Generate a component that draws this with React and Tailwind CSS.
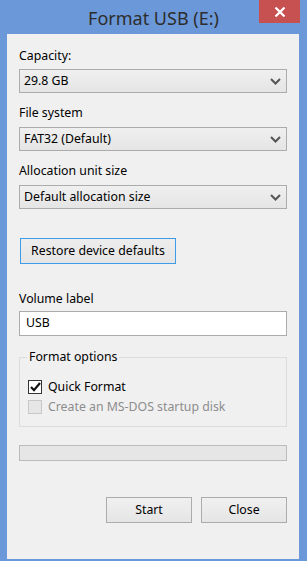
import React from "react";

const font = { fontFamily: '"Segoe UI", "Noto Sans", "Open Sans", sans-serif' };

function Chevron() {
  return (
    <svg width="11" height="7" viewBox="0 0 11 7" className="block">
      <path d="M1 1 L5.5 5.5 L10 1" fill="none" stroke="#555" strokeWidth="2" />
    </svg>
  );
}

function Combo({ value }) {
  return (
    <div className="mx-3 flex h-[24px] items-center justify-between border border-[#acacac] bg-gradient-to-b from-[#f0f0f0] to-[#e5e5e5] pl-[4px] pr-[5px]">
      <span className="text-[12.3px] text-black">{value}</span>
      <Chevron />
    </div>
  );
}

function Label({ children, className = "" }) {
  return <div className={"mx-3 text-[12.3px] leading-[16px] text-black " + className}>{children}</div>;
}

export default function App() {
  return (
    <div className="flex h-[561px] w-[307px] flex-col bg-[#6b98d8]" style={font}>
      <div className="relative flex h-[34px] shrink-0 items-start justify-center">
        <span className="mt-[6px] text-[18px] leading-[24px] text-[#2d2d2d]">Format USB (E:)</span>
        <div className="absolute right-[7px] top-0 flex h-[23px] w-[41px] items-center justify-center bg-[#c75050]">
          <svg width="12" height="10" viewBox="0 0 12 10">
            <path d="M1.5 0.5 L10.5 9.5 M10.5 0.5 L1.5 9.5" stroke="white" strokeWidth="2.2" />
          </svg>
        </div>
      </div>
      <div className="ml-[7px] mr-[8px] flex h-[525px] flex-col bg-[#f0f0f0]">
        <Label className="mt-[14px]">Capacity:</Label>
        <div className="mt-[5px]"><Combo value="29.8 GB" /></div>
        <Label className="mt-[12px]">File system</Label>
        <div className="mt-[6px]"><Combo value="FAT32 (Default)" /></div>
        <Label className="mt-[12px]">Allocation unit size</Label>
        <div className="mt-[6px]"><Combo value="Default allocation size" /></div>
        <div className="mx-[13px] mt-[29px] flex">
          <div className="flex h-[26px] w-[156px] items-center justify-center border border-[#3c9ce8] bg-gradient-to-b from-[#ededed] to-[#e5e5e5] text-[12.3px] text-black">
            Restore device defaults
          </div>
        </div>
        <Label className="mt-[27px]">Volume label</Label>
        <div className="mx-3 mt-[4px] flex h-[25px] items-center border border-[#acacac] bg-white pl-[6px] text-[12.3px] text-black">USB</div>
        <div className="relative mx-3 mt-[21px] h-[70px] border border-[#dcdcdc]">
          <div className="absolute left-[7px] top-[-9px] bg-[#f0f0f0] px-[2px] text-[12.3px] leading-[16px] text-black">Format options</div>
          <div className="ml-[8px] mt-[21px] flex items-center gap-[6px]">
            <div className="flex h-[14px] w-[14px] items-center justify-center border border-[#333] bg-white">
              <svg width="11" height="10" viewBox="0 0 11 10">
                <path d="M1 5 L4 8.2 L10 1" fill="none" stroke="#111" strokeWidth="2.2" />
              </svg>
            </div>
            <span className="text-[12.3px] leading-[16px] text-black">Quick Format</span>
          </div>
          <div className="ml-[8px] mt-[4px] flex items-center gap-[6px]">
            <div className="h-[14px] w-[14px] border border-[#c8c8c8] bg-[#e6e6e6]" />
            <span className="text-[12.3px] leading-[16px] text-[#8d8d8d]">Create an MS-DOS startup disk</span>
          </div>
        </div>
        <div className="mx-3 mt-[18px] h-[16px] border border-[#bcbcbc] bg-[#e6e6e6]" />
        <div className="mr-3 mt-[36px] flex justify-end gap-[9px]">
          <div className="flex h-[26px] w-[86px] items-center justify-center border border-[#acacac] bg-gradient-to-b from-[#f0f0f0] to-[#e5e5e5] text-[12.3px] text-black">Start</div>
          <div className="flex h-[26px] w-[86px] items-center justify-center border border-[#acacac] bg-gradient-to-b from-[#f0f0f0] to-[#e5e5e5] text-[12.3px] text-black">Close</div>
        </div>
      </div>
    </div>
  );
}
